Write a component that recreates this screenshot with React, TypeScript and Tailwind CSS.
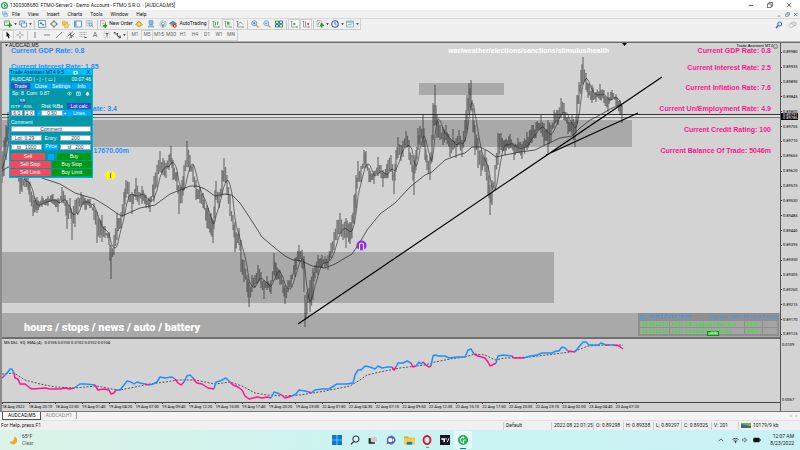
import type { ReactNode } from "react";

const ui = "font-['Roboto','Noto_Sans',sans-serif]";
const arial = "font-['Liberation_Sans',Arial,sans-serif]";

/* ---------- chart data: [x, high, low] ---------- */
const range: number[][] = [
  [2, 155, 183], [4, 140, 176], [6, 125, 160], [8, 112, 140], [14, 110, 150], [20, 170, 194], [22, 174, 192], [25, 172, 187], [28, 175, 190],
  [30, 182, 202], [33, 195, 216], [35, 198, 212], [37, 197, 213], [42, 196, 207], [48, 196, 206], [53, 194, 204], [58, 198, 212],
  [62, 187, 203], [65, 195, 206], [67, 200, 229], [70, 198, 213], [72, 212, 240], [75, 200, 227], [78, 197, 215], [81, 192, 207],
  [85, 198, 210], [90, 199, 208], [94, 203, 220], [97, 212, 243], [100, 220, 238], [102, 215, 242], [105, 226, 238], [109, 232, 245],
  [111, 245, 279], [114, 235, 255], [117, 213, 240], [121, 212, 228], [124, 192, 215], [126, 180, 198], [129, 182, 202],
  [132, 192, 214], [136, 178, 200], [139, 192, 205], [142, 186, 204], [146, 195, 208], [150, 197, 212], [154, 176, 202],
  [157, 165, 187], [160, 151, 172], [163, 158, 175], [166, 163, 178], [169, 155, 170], [171, 146, 165], [173, 160, 180],
  [177, 172, 190], [179, 185, 214], [182, 180, 203], [184, 165, 190], [187, 141, 167], [190, 155, 172], [193, 165, 182],
  [196, 180, 200], [200, 187, 203], [203, 193, 208], [207, 205, 228], [211, 213, 235], [213, 220, 243], [215, 190, 218],
  [216, 181, 200], [219, 192, 208], [222, 170, 195], [224, 158, 182], [227, 175, 195], [230, 195, 216], [233, 215, 230],
  [235, 222, 252], [239, 228, 245], [241, 240, 272], [244, 260, 282], [247, 275, 292], [249, 282, 307], [252, 275, 292],
  [255, 275, 288], [258, 265, 283], [261, 272, 288], [264, 280, 299], [267, 276, 290], [271, 280, 294], [274, 253, 275],
  [276, 263, 280], [280, 270, 285], [283, 280, 293], [285, 285, 304], [288, 280, 292], [291, 275, 287], [295, 258, 277],
  [299, 245, 262], [302, 250, 268], [304, 256, 292], [305, 295, 327], [307, 292, 314], [309, 288, 298], [310, 280, 312],
  [313, 268, 300], [315, 265, 278], [318, 255, 275], [322, 255, 268], [325, 256, 268], [328, 255, 270], [331, 243, 258],
  [334, 232, 250], [337, 220, 240], [340, 213, 234], [343, 224, 240], [346, 218, 248], [350, 222, 244], [352, 215, 238],
  [354, 195, 224], [356, 175, 208], [358, 161, 182], [361, 166, 182], [364, 150, 168], [366, 151, 168], [369, 168, 182],
  [374, 171, 184], [378, 157, 176], [381, 165, 178], [383, 170, 187], [388, 160, 178], [391, 155, 172], [394, 172, 194],
  [396, 150, 172], [398, 137, 158], [401, 145, 161], [403, 141, 157], [406, 131, 147], [409, 140, 160], [412, 155, 172],
  [414, 160, 195], [416, 150, 170], [418, 128, 150], [420, 126, 145], [423, 114, 147], [425, 140, 160], [427, 155, 170],
  [430, 157, 180], [432, 135, 162], [433, 103, 140], [435, 85, 125], [437, 115, 138], [440, 125, 140], [443, 127, 145],
  [446, 125, 140], [450, 138, 157], [453, 129, 150], [456, 138, 158], [459, 130, 145], [462, 140, 157], [465, 120, 142],
  [467, 95, 130], [469, 83, 115], [471, 80, 110], [473, 108, 132], [475, 125, 155], [478, 138, 168], [481, 150, 176],
  [485, 150, 172], [488, 165, 195], [490, 185, 215], [492, 180, 205], [495, 165, 190], [498, 133, 165], [501, 133, 150],
  [505, 140, 155], [510, 134, 148], [514, 145, 160], [518, 138, 152], [522, 144, 159], [527, 132, 150], [532, 125, 143],
  [536, 122, 138], [541, 115, 133], [544, 123, 145], [548, 120, 153], [551, 125, 142], [554, 110, 128], [558, 110, 125],
  [561, 98, 117], [564, 103, 120], [568, 117, 134], [572, 114, 135], [575, 122, 147], [577, 95, 124], [579, 82, 104],
  [581, 70, 94], [583, 57, 84], [586, 73, 90], [588, 83, 98], [592, 85, 103], [596, 92, 102], [600, 84, 100], [604, 90, 103],
  [608, 92, 112], [612, 90, 100], [616, 94, 106], [620, 100, 115], [622, 105, 123],
];

type Bar = { x: number; hi: number; lo: number };

function buildBars(): Bar[] {
  const bars: Bar[] = [];
  let seed = 7;
  const rnd = () => {
    seed = (seed * 16807) % 2147483647;
    return seed / 2147483647;
  };
  for (let i = 0; i < range.length - 1; i++) {
    const [x0, h0, l0] = range[i];
    const [x1, h1, l1] = range[i + 1];
    const n = Math.max(1, Math.round((x1 - x0) / 1.3));
    for (let k = 0; k < n; k++) {
      const f = k / n;
      const hi = h0 + (h1 - h0) * f;
      const lo = l0 + (l1 - l0) * f;
      const s = k === 0 ? 0 : (lo - hi) * 0.4;
      bars.push({ x: x0 + (x1 - x0) * f, hi: hi + s * rnd(), lo: lo - s * rnd() });
    }
  }
  bars.push({ x: 622, hi: 105, lo: 123 });
  return bars;
}

const bars = buildBars();
const wickPath = bars.map((b) => `M${b.x.toFixed(1)} ${b.hi.toFixed(1)}V${b.lo.toFixed(1)}`).join("");
const fastPath = bars
  .map((b, i) => {
    const win = bars.slice(Math.max(0, i - 5), i + 1);
    const y = win.reduce((a, c) => a + (c.hi + c.lo) / 2, 0) / win.length;
    return `${i ? "L" : "M"}${b.x.toFixed(1)} ${y.toFixed(1)}`;
  })
  .join("");

const slow =
  "2,171 8,167 24,170 42,178 60,184 75,193 95,199 108,207 118,214 122,216 140,208 155,205 170,194 180,190 190,186 197,186 205,189 215,196 225,194 232,195 240,203 250,218 262,237 275,248 285,256 293,260 302,261 312,266 325,268 335,264 345,258 352,254 360,242 367,230 380,214 395,203 410,187 425,175 432,172 445,160 458,155 465,153 472,147 480,147 488,151 496,157 505,155 520,152 535,150 545,145 560,138 572,136 580,128 590,120 600,115 610,109 622,104";

const BLUE = "#1e90ff";
const PINK = "#ff1493";
const volatility: [string, string][] = [
  [PINK, "2,378 5,375"],
  [BLUE, "5,375 8,372 10,369 12,369 14,373"],
  [PINK, "14,373 15,378 18,379 20,384 25,384 30,388 32,389 45,388 50,389 60,389 65,388 70,389 74,388"],
  [BLUE, "74,388 77,386 80,384 86,384 95,385"],
  [PINK, "95,385 98,390 104,389 109,390 111,394 114,393 116,390"],
  [BLUE, "116,390 120,390 124,385 127,381 131,382 134,384 137,382 140,383 145,384"],
  [PINK, "145,384 149,385"],
  [BLUE, "149,385 153,384 157,382 160,377 165,378 172,377 175,379"],
  [PINK, "175,379 178,383 181,385 184,382"],
  [BLUE, "184,382 187,376 190,375 193,378"],
  [PINK, "193,378 195,381 197,383 202,384 208,388 214,389"],
  [BLUE, "214,389 216,382 220,381 226,378 230,382"],
  [PINK, "230,382 233,385 238,387 242,390 245,396 249,399 257,397 262,398 267,397 271,398"],
  [BLUE, "271,398 274,392 280,394"],
  [PINK, "280,394 283,396 285,398 292,396"],
  [BLUE, "292,396 296,394 299,390 305,391 309,392"],
  [PINK, "309,392 311,393"],
  [BLUE, "311,393 315,390 322,389 329,389 337,384 347,384 353,383 355,375 358,370 361,370 365,366 370,367 375,369 378,366 382,368 388,367 392,367"],
  [PINK, "392,367 394,370 396,367"],
  [BLUE, "396,367 398,363 403,363 407,361 411,363"],
  [PINK, "411,363 413,367 416,366"],
  [BLUE, "416,366 419,362 421,364 423,362"],
  [PINK, "423,362 426,365 429,367 431,366"],
  [BLUE, "431,366 433,356 435,355 438,356 445,356 449,358 457,357 465,357 468,350 471,349 474,354"],
  [PINK, "474,354 478,356 485,358 488,362 490,366 496,363"],
  [BLUE, "496,363 498,356 503,355 512,356"],
  [PINK, "512,356 514,358 524,358"],
  [BLUE, "524,358 530,356 537,355 542,353 552,353 556,351 559,351 562,347 565,348 568,351"],
  [PINK, "568,351 575,352"],
  [BLUE, "575,352 578,348 583,342 586,342 589,345 598,345 601,343 606,345"],
  [PINK, "606,345 609,345"],
  [BLUE, "609,345 614,345"],
  [PINK, "614,345 619,346 623,349"],
];
const signal =
  "2,374 14,373 25,380 40,384 55,387 75,388 85,387 97,386 112,389 120,390 135,387 150,384 165,382 178,380 195,380 215,384 230,382 242,386 255,393 267,395 285,396 300,395 325,391 350,386 360,380 367,375 380,372 400,368 425,365 435,362 450,359 465,357 475,354 485,355 495,360 505,358 530,357 555,354 570,352 578,350 588,346 605,345 623,345";

const prices = Array.from({ length: 20 }, (_, i) => (0.8998 - i * 0.00045).toFixed(5));
const times = [
  "18 Aug 2022", "18 Aug 20:10", "18 Aug 22:50", "19 Aug 01:40", "19 Aug 04:20", "19 Aug 07:00", "19 Aug 09:40", "19 Aug 12:20",
  "19 Aug 15:00", "19 Aug 17:40", "19 Aug 20:20", "19 Aug 23:00", "22 Aug 01:50", "22 Aug 04:30", "22 Aug 07:10", "22 Aug 09:50",
  "22 Aug 12:30", "22 Aug 15:10", "22 Aug 17:50", "22 Aug 20:30", "22 Aug 23:10", "23 Aug 02:00", "23 Aug 04:40", "23 Aug 07:20",
];

/* ---------- small pieces ---------- */
function Ico({ children, className = "size-[8px]" }: { children: ReactNode; className?: string }) {
  return (
    <svg viewBox="0 0 16 16" className={`shrink-0 ${className}`} fill="none" aria-hidden="true">
      {children}
    </svg>
  );
}

function Tool({ label, children, w = "w-[12px]", on = false }: { label: string; children: ReactNode; w?: string; on?: boolean }) {
  return (
    <button
      aria-label={label}
      className={`flex h-[11px] shrink-0 items-center justify-center gap-[2px] ${w} ${on ? "border border-[#d0d0d0] bg-[#f8f8f8]" : ""}`}
    >
      {children}
    </button>
  );
}

const Caret = () => (
  <Ico className="h-[4px] w-[3px]">
    <path d="M1 4h14l-7 9z" fill="#222" />
  </Ico>
);
const Sep = () => <div className="mx-px h-[9px] w-px shrink-0 bg-[#c4c4c4]" />;

const Plus = () => <path d="M8 10h3V7h3v3h2v3h-2v3h-3v-3H8z" fill="#16a516" />;
const Axes = () => <path d="M3 2v12h12M1 4l2-2 2 2M13 12l2 2-2 2" stroke="#667" strokeWidth="1.2" />;

function Toolbar() {
  return (
    <div className="flex h-[12px] items-center border-t border-[#d9d9d9] bg-[#f0f0f0]">
      <div className={`flex h-[11px] items-center border-r border-b border-[#cfcfcf] pl-[3px] ${ui} text-[5px] text-[#111]`}>
        <Tool label="New chart" w="w-[15px]">
          <Ico><path d="M1 2h10v9H1z" fill="#fff" stroke="#3f8f3f" strokeWidth="1.6" /><path d="M3 5h6M3 8h6" stroke="#7ab" /><path d="M7 9h3V6h3v3h3v3h-3v3h-3v-3H7z" fill="#16a516" /></Ico>
          <Caret />
        </Tool>
        <Tool label="Profiles" w="w-[15px]">
          <Ico><path d="M1 2h10v8H1z" fill="#dbe9f7" stroke="#4b86c2" strokeWidth="1.5" /><path d="M5 6h10v8H5z" fill="#f4f8fc" stroke="#4b86c2" strokeWidth="1.5" /></Ico>
          <Caret />
        </Tool>
        <Sep />
        <Tool label="Market Watch"><Ico><path d="M1 1h14v14H1z" fill="#eaf4fc" stroke="#3c8fd0" strokeWidth="1.5" /><path d="M3 8l3-5 3 5z" fill="#2ca52c" /><path d="M7 8h6l-3 5z" fill="#e06a2a" /></Ico></Tool>
        <Tool label="Data Window"><Ico><circle cx="8" cy="8" r="5" stroke="#666" strokeWidth="1.4" /><path d="M8 0v5M8 11v5M0 8h5M11 8h5" stroke="#555" strokeWidth="1.4" /></Ico></Tool>
        <Tool label="Navigator"><Ico><path d="M1 2h5l1 2h4v6H1z" fill="#f5cf52" stroke="#c6982a" /><path d="M9 5l2 3.500 4 .5-3 3 .8 3.500L9 14l-4 2 .5-4-2.500-2.500L7 9z" fill="#f8dc6a" stroke="#c6982a" /></Ico></Tool>
        <Tool label="Terminal"><Ico><path d="M1 2h14v12H1z" fill="#fff" stroke="#2f7fd0" strokeWidth="1.6" /><path d="M2 3h3v10H2z" fill="#5aa2e0" /></Ico></Tool>
        <Tool label="Strategy Tester"><Ico><path d="M1 1h11v11H1z" fill="#e8f0f8" stroke="#7c9cc0" /><path d="M3 4h7M3 7h4" stroke="#6a8" /><circle cx="9" cy="9" r="3" fill="#cfe6fa" stroke="#4779b0" strokeWidth="1.300" /><path d="M11 11l4 4" stroke="#c99a2e" strokeWidth="2" /></Ico></Tool>
        <Sep />
        <Tool label="New Order" w="w-[34px]">
          <Ico><path d="M3 1h8l2 3v8H3z" fill="#fff" stroke="#777" /><path d="M5 4h5M5 7h5" stroke="#888" /><Plus /></Ico>
          <span className="whitespace-nowrap">New Order</span>
        </Tool>
        <Tool label="MetaEditor"><Ico><path d="M8 2l7 7-7 5-7-5z" fill="#f0b92e" stroke="#b37a14" /><path d="M8 5l3 4-3 2-3-2z" fill="#fbe28a" /></Ico></Tool>
        <Tool label="Cloud"><Ico><rect x="4" y="1" width="8" height="8" rx="1" fill="#7fbcf0" stroke="#3c82c4" /><path d="M2 14c0-4 12-4 12 0z" fill="#a9cdec" stroke="#4b86c2" /></Ico></Tool>
        <Tool label="Signals"><Ico><circle cx="8" cy="8" r="6.500" stroke="#8fb0c8" strokeWidth="1.500" /><circle cx="8" cy="8" r="3.500" stroke="#6a9" strokeWidth="1.500" /><path d="M8 8v7" stroke="#2a9d4a" strokeWidth="2" /></Ico></Tool>
        <Tool label="AutoTrading" w="w-[38px]">
          <Ico><path d="M1 7l7-5 7 5-7 3z" fill="#4f94d8" stroke="#2a62a0" /><path d="M3 9v3c3 3 7 3 10 0V9l-5 2z" fill="#e8b52e" /><circle cx="11.500" cy="11.500" r="4" fill="#d8341e" /><path d="M10 10h3v3h-3z" fill="#fff" /></Ico>
          <span className="whitespace-nowrap">AutoTrading</span>
        </Tool>
        <Sep />
        <Tool label="Bar chart"><Ico><Axes /><path d="M7 4v7M11 3v7M5.500 9H7M11 5h2" stroke="#2a9d2a" strokeWidth="1.400" /></Ico></Tool>
        <Tool label="Candlesticks" on><Ico><Axes /><path d="M8 2v10M12 3v8" stroke="#188a18" /><path d="M6.500 4h3v5h-3z" fill="#20a820" /></Ico></Tool>
        <Tool label="Line chart"><Ico><Axes /><path d="M4 11c2-8 5-8 10-2" stroke="#2a9d2a" strokeWidth="1.300" /></Ico></Tool>
        <Sep />
        <Tool label="Zoom in"><Ico><circle cx="6.500" cy="6.500" r="5" fill="#d6eafc" stroke="#3f80c8" strokeWidth="1.500" /><path d="M4 6.500h5M6.500 4v5" stroke="#2b66a8" strokeWidth="1.300" /><path d="M10 10l5 5" stroke="#d0a02e" strokeWidth="2.400" /></Ico></Tool>
        <Tool label="Zoom out"><Ico><circle cx="6.500" cy="6.500" r="5" fill="#d6eafc" stroke="#5b93cc" strokeWidth="1.500" /><path d="M4 6.500h5" stroke="#2b66a8" strokeWidth="1.300" /><path d="M10 10l5 5" stroke="#d0a02e" strokeWidth="2.400" /></Ico></Tool>
        <Tool label="Tile windows"><Ico><path d="M1 2h6v5H1zM9 9h6v5H9z" fill="#dff0d8" stroke="#2f9a2f" strokeWidth="1.800" /><path d="M9 2h6v5H9zM1 9h6v5H1z" fill="#dbe9f7" stroke="#2f66b8" strokeWidth="1.800" /></Ico></Tool>
        <Sep />
        <Tool label="Auto scroll" on><Ico><Axes /><path d="M7 5l5 3-5 3z" fill="#20a820" /></Ico></Tool>
        <Tool label="Chart shift" on><Ico><Axes /><path d="M7 3v9" stroke="#357" strokeWidth="1.300" /><path d="M14 5L9 8l5 3z" fill="#d0402a" /></Ico></Tool>
        <Sep />
        <Tool label="Indicators" w="w-[15px]"><Ico><path d="M2 1h8l2 3v9H2z" fill="#eee" stroke="#888" /><path d="M4 10c2-6 3-6 5-3" stroke="#555" /><path d="M8 9h2V6h3v3h3v3h-3v3h-3v-3H8z" fill="#16a516" /></Ico><Caret /></Tool>
        <Tool label="Periods" w="w-[15px]"><Ico><circle cx="8" cy="8" r="6.500" fill="#e8f2fc" stroke="#1f62b8" strokeWidth="2.200" /><path d="M8 4v4l3 2" stroke="#333" strokeWidth="1.300" /></Ico><Caret /></Tool>
        <Tool label="Templates" w="w-[15px]"><Ico><path d="M1 2h14v12H1z" fill="#eef4fa" stroke="#6f9cc8" strokeWidth="1.400" /><path d="M1 4h14" stroke="#6f9cc8" strokeWidth="2" /><path d="M3 11l3-3 3 2 4-4" stroke="#3a9a5a" strokeWidth="1.300" /></Ico><Caret /></Tool>
      </div>
      <div className="ml-auto flex items-center gap-[5px] pr-[3px]">
        <button aria-label="Search"><Ico><circle cx="9.500" cy="6" r="4" stroke="#2a62c0" strokeWidth="2" /><path d="M6.500 9L2 14" stroke="#2a62c0" strokeWidth="2.400" /></Ico></button>
        <button aria-label="Chat"><Ico className="h-[8px] w-[9px]"><ellipse cx="10" cy="6" rx="5.500" ry="4" fill="#ddd" stroke="#999" /><ellipse cx="5.500" cy="9" rx="5" ry="3.500" fill="#f4f4f4" stroke="#999" /></Ico></button>
      </div>
    </div>
  );
}

function DrawBar() {
  const frames = ["M1", "M5", "M15", "M30", "H1", "H4", "D1", "W1", "MN"];
  const g = "#666";
  return (
    <div className="flex h-[11px] items-center bg-[#f0f0f0]">
      <div className={`flex h-[11px] items-center border-r border-b border-[#cfcfcf] pl-[2px] ${ui} text-[5px] text-[#666]`}>
        <Tool label="Cursor" on><Ico><path d="M5 1l7 8H9l2 5-2 1-2-5-2 2z" fill="#111" /></Ico></Tool>
        <Tool label="Crosshair"><Ico><path d="M8 1v5M8 10v5M1 8h5M10 8h5" stroke={g} strokeWidth="1.400" /></Ico></Tool>
        <Sep />
        <Tool label="Vertical line"><Ico><path d="M8 2v12" stroke={g} strokeWidth="1.600" /></Ico></Tool>
        <Tool label="Horizontal line"><Ico><path d="M2 8h12" stroke={g} strokeWidth="1.600" /></Ico></Tool>
        <Tool label="Trendline"><Ico><path d="M2 14L14 2" stroke={g} strokeWidth="1.600" /></Ico></Tool>
        <Tool label="Channel"><Ico><path d="M1 11L12 1M4 15L15 5M3 6l10 5M6 3l3 11" stroke="#555" strokeWidth="1.500" /></Ico></Tool>
        <Tool label="Fibonacci"><Ico><path d="M1 3h14M1 7h14M1 11h11" stroke="#888" strokeWidth="1.400" strokeDasharray="2 1" /><path d="M11 13h4" stroke="#444" strokeWidth="2" /></Ico></Tool>
        <Tool label="Text"><span className="text-[7px] leading-none">A</span></Tool>
        <Tool label="Text label"><Ico><path d="M2 2h12v12H2z" stroke="#999" strokeDasharray="2 2" /><path d="M5 5h6M8 5v7" stroke="#444" strokeWidth="1.600" /></Ico></Tool>
        <Tool label="Arrows" w="w-[13px]"><Ico><path d="M2 3l4 4 3-3v6l6 3M2 3h3M11 14l4-1-1-4" stroke="#333" strokeWidth="1.800" /></Ico><Caret /></Tool>
        <Sep />
        {frames.map((f) => (
          <Tool key={f} label={f} on={f === "M5"}>{f}</Tool>
        ))}
      </div>
    </div>
  );
}

/* ---------- trade panel ---------- */
const field = "h-[6px] min-w-0 border border-[#8ad] bg-white text-center text-[5px] leading-none text-[#333] outline-none";
const azure = "bg-[#00a8ff] text-white";
const navy = "bg-[#2f4fd0] text-white";

function TradePanel() {
  const tabs = ["Trade", "Close", "Settings", "Info"];
  return (
    <section className={`absolute top-[25px] left-[7px] flex h-[110px] w-[84px] flex-col border border-[#00b4e6] bg-[#0097a7] ${arial} text-[5px] leading-none text-white`}>
      <header className="flex h-[6px] items-center justify-between bg-[#00bfff] pr-[2px] text-[#124]">
        <h2 className="whitespace-nowrap">Trade Assistant MT4 9.5</h2>
        <Ico className="size-[5px]"><path d="M1 4h4l1-2h4l1 2h4v10H1z" fill="#e8f4fa" /><circle cx="8" cy="9" r="3" fill="#28a" /></Ico>
        <button aria-label="Close panel">X</button>
      </header>
      <div className="flex h-[8px] items-center justify-between px-px">
        <span>AUDCAD | - | - | ▭ |</span>
        <span>00:07:46</span>
      </div>
      <div className="grid h-[6px] grid-cols-4 gap-px px-px">
        {tabs.map((t, i) => (
          <button key={t} className={i === 0 ? navy : azure}>{t}</button>
        ))}
      </div>
      <div className="flex h-[9px] items-center pl-[2px]">
        <span className="mr-auto">Sp: 8&nbsp; Com: 0.87</span>
        <div className="flex gap-[4px] pr-[2px]">
          <Ico className="size-[5px]"><path d="M1 8c3-6 11-6 14 0-3 6-11 6-14 0z" stroke="#fff" strokeWidth="2" /><circle cx="8" cy="8" r="2.500" fill="#fff" /></Ico>
          <Ico className="size-[5px]"><path d="M2 4h12v10H2zM4 1v3M12 1v3M8 6v4h3" stroke="#fff" strokeWidth="2" /></Ico>
          <Ico className="size-[5px]"><path d="M3 12c2-2 1-9 5-9s3 7 5 9zM6 14h4" fill="#fff" stroke="#fff" strokeWidth="2" /></Ico>
        </div>
      </div>
      <div className="flex h-[18px] px-px pt-[2px]">
        <div className="relative grid w-[24px] grid-cols-2 content-end gap-x-px gap-y-px">
          <span className="absolute top-0 left-[8px] bg-[#2f4fd0] px-px text-[3px]">R/R</span>
          <label htmlFor="rtp" className="text-[4px]">R/TP</label>
          <label htmlFor="rsl" className="text-[4px]">R/SL</label>
          <input id="rtp" defaultValue="6.0" className={field} />
          <input id="rsl" defaultValue="1.0" className={field} />
        </div>
        <div className="ml-[2px] flex w-[30px] flex-col items-center justify-end gap-px">
          <label htmlFor="risk" className="whitespace-nowrap">Risk %Ba</label>
          <div className="flex w-full">
            <button aria-label="Decrease risk" className={`w-[4px] ${azure}`}>-</button>
            <input id="risk" defaultValue="0.50" className={`flex-1 ${field}`} />
            <button aria-label="Increase risk" className={`w-[4px] ${azure}`}>+</button>
          </div>
        </div>
        <div className="ml-auto flex w-[24px] flex-col justify-end gap-px">
          <button className={`h-[6px] whitespace-nowrap ${navy}`}>Lot calc</button>
          <button className={`h-[6px] ${azure}`}>Lines</button>
        </div>
      </div>
      <div className="flex h-[18px] flex-col justify-end gap-px px-px pb-[2px]">
        <label htmlFor="comment">Comment</label>
        <input id="comment" defaultValue="Comment" className={field} />
      </div>
      <div className="grid h-[17px] grid-cols-[31px_1fr_31px] items-center gap-x-[2px] px-px text-center">
        <input aria-label="Lot" defaultValue="Lot: 0.29" className={`${field} bg-[#d3d3d3] pr-[4px]`} />
        <label htmlFor="entry">Entry:</label>
        <input id="entry" defaultValue="200" className={field} />
        <input aria-label="Take profit" defaultValue="tp   1000" className={field} />
        <button className={`h-[6px] ${azure}`}>Price</button>
        <input aria-label="Stop loss" defaultValue="sl   200" className={field} />
      </div>
      <div className="mt-auto flex flex-col gap-px pb-px">
        <div className="flex h-[7px] items-center gap-[3px] px-px">
          <button className="h-full flex-1 bg-[#f04a5c]">Sell</button>
          <input type="checkbox" aria-label="Confirm" className="size-[6px] appearance-none bg-[#00a8ff]" />
          <button className="h-full flex-1 bg-[#009a10]">Buy</button>
        </div>
        <div className="grid grid-cols-2 gap-px">
          <button className="h-[7px] bg-[#f04a5c]">Sell Stop</button>
          <button className="h-[7px] bg-[#009a10]">Buy Stop</button>
          <button className="h-[7px] bg-[#f04a5c]">Sell Limit</button>
          <button className="h-[7px] bg-[#009a10]">Buy Limit</button>
        </div>
      </div>
    </section>
  );
}

function NewsPanel() {
  return (
    <div className={`absolute right-px bottom-px w-[141px] bg-[#8f8f8f] px-px pb-px ${arial} text-[5px] leading-none`}>
      <div className="flex h-[7px] items-center text-[#1e9fff]">
        <Ico className="mr-[3px] size-[6px]"><path d="M1 3l6 1 2-3v5l5 3-6 1-1 5-3-5H1l2-3z" fill="#1eb0ff" /></Ico>
        <span className="mr-auto">Next 2 Forex News</span>
        <span className="text-[4px]">Copyrights DaVinci FX Group</span>
        <span className="ml-[2px] text-[4px]">Forecast</span>
      </div>
      <table className="w-full table-fixed border-separate border-spacing-px text-[#10f010]">
        <colgroup>
          <col className="w-[29px]" /><col className="w-[74px]" /><col className="w-[17px]" /><col />
        </colgroup>
        <tbody>
          <tr className="h-[6px] [&>td]:bg-[#a4a4a4] [&>td]:p-0 [&>td]:pl-px [&>td]:whitespace-nowrap"><td>0d 08:22:14</td><td>AUD: CB Leading Index m/m</td><td>0.0%</td><td /></tr>
          <tr className="h-[6px] [&>td]:bg-[#a4a4a4] [&>td]:p-0 [&>td]:pl-px [&>td]:whitespace-nowrap"><td>1d 08:22:14</td><td>CAD: Corporate Profits q/q</td><td>1.9%</td><td /></tr>
        </tbody>
      </table>
      <span className="absolute right-[60px] bottom-0 border border-[#178a17] bg-[#5ad05a] px-px text-[3px] text-[#e8ffe8]">+8:00</span>
    </div>
  );
}

function MainChart() {
  const note = "absolute whitespace-nowrap text-[7px] leading-[8px] font-bold";
  return (
    <div className={`relative min-h-0 flex-1 overflow-hidden bg-[#d3d3d3] ${arial}`}>
      <svg viewBox="2 43 778 294" preserveAspectRatio="none" className="absolute inset-0 h-full w-full" fill="none" aria-label="AUDCAD price chart">
        <g fill="#a9a9a9">
          <path d="M2 120h630v27H2zM419 83h85v12h-85zM2 252h552v51H2zM2 313h778v24H2z" />
        </g>
        <path d="M2 116h778" stroke="#eee" />
        <path d="M2 114.500h778" stroke="#333" />
        <path d="M2 117.500h778" stroke="#777" />
        <path d={wickPath} stroke="#222" strokeOpacity="0.520" strokeWidth="1.300" />
        <path d={fastPath} stroke="#222" strokeWidth="0.600" />
        <polyline points={slow} stroke="#333" strokeWidth="0.800" />
        <path d="M298 324L662 77M546 155L638 113" stroke="#000" strokeWidth="1.200" />
        <path d="M622 43h5l-2.500 3z" fill="#000" />
        <path d="M5 44.500h3l-1.500 2z" fill="#000" />
        <circle cx="110.500" cy="175.500" r="5" fill="#ff0" />
        <path d="M110.500 170v3M110.500 178v3" stroke="#d3d3d3" strokeWidth="3" />
        <path d="M110.500 173v5" stroke="#770" strokeWidth="1.200" />
        <circle cx="361.500" cy="245.500" r="5" fill="#8a2be2" />
        <path d="M359.500 250v-5a2 2 0 0 1 4 0v5" stroke="#f4ecff" strokeWidth="1.200" />
      </svg>
      <span className="absolute top-0 left-[7px] text-[5px] leading-[5px] text-black">AUDCAD,M5</span>
      <span className="absolute top-0 right-[2px] flex items-center text-[4px] leading-[6px] text-black">
        Trade Assistant MT4
        <Ico className="size-[5px]"><circle cx="8" cy="8" r="7" stroke="#333" strokeWidth="1.500" /><path d="M5 6h1M10 6h1M5 10c2 2 4 2 6 0" stroke="#333" strokeWidth="1.500" /></Ico>
      </span>
      <div className="text-[#1e90ff]">
        <p className={`${note} top-[4px] left-[9px]`}>Current GDP Rate: 0.8</p>
        <p className={`${note} top-[20px] left-[9px]`}>Current Interest Rate: 1.85</p>
        <p className={`${note} top-[62px] left-[9px] flex w-[106px] justify-end overflow-hidden`}>Current Un/Employment Rate: 3.4</p>
        <p className={`${note} top-[104px] left-[9px] flex w-[118px] justify-end overflow-hidden`}>Current Balance Of Trade: 17670.00m</p>
      </div>
      <div className="text-[#ff1493]">
        <p className={`${note} top-[4px] right-[9px]`}>Current GDP Rate: 0.8</p>
        <p className={`${note} top-[21px] right-[9px]`}>Current Interest Rate: 2.5</p>
        <p className={`${note} top-[41px] right-[9px]`}>Current Inflation Rate: 7.6</p>
        <p className={`${note} top-[62px] right-[9px]`}>Current Un/Employment Rate: 4.9</p>
        <p className={`${note} top-[83px] right-[9px]`}>Current Credit Rating: 100</p>
        <p className={`${note} top-[104px] right-[9px]`}>Current Balance Of Trade: 5046m</p>
      </div>
      <p className={`${note} top-[4px] right-[171px] text-white`}>war/weather/elections/sanctions/stimulus/health</p>
      <p className="absolute bottom-[2px] left-[22px] font-['Roboto',sans-serif] text-[11px] leading-[14px] font-black whitespace-nowrap text-white">
        hours / stops / news / auto / battery
      </p>
      <NewsPanel />
      <TradePanel />
    </div>
  );
}

function ChartArea() {
  return (
    <main className="flex min-h-0 flex-1 border-t border-l-2 border-t-[#696969] border-l-[#8a8a8a] bg-[#d3d3d3]">
      <div className="flex min-w-0 flex-1 flex-col">
        <MainChart />
        <div className="h-[2px] bg-[#6e6e6e]" />
        <div className="relative h-[63px]">
          <svg viewBox="2 339 778 63" preserveAspectRatio="none" className="absolute inset-0 h-full w-full" fill="none" aria-label="Volatility indicator">
            <polyline points={signal} stroke="#333" strokeWidth="0.800" strokeDasharray="2 1.500" />
            {volatility.map(([c, p], i) => (
              <polyline key={i} points={p} stroke={c} strokeWidth="1.500" strokeLinejoin="round" />
            ))}
          </svg>
          <p className={`absolute top-px left-[2px] ${ui} text-[4px] leading-[5px] whitespace-pre text-black`}>M5 DSL  VQ  EMA (4)   0.0105 0.0103 0.0102 0.0102 0.0104</p>
        </div>
        <div className="h-[9px] border-t border-[#444]">
          <ol className={`grid w-[82.3%] grid-cols-24 ${ui} text-[4px] leading-[8px] text-black`}>
            {times.map((t) => (
              <li key={t} className="whitespace-nowrap"><span className="block h-px w-px bg-[#444]" /><span className="block leading-[6px]">{t}</span></li>
            ))}
          </ol>
        </div>
      </div>
      <div className={`relative flex w-[20px] flex-col border-l border-[#555] ${ui} text-[4px] leading-none text-black`}>
        <ol className="flex flex-1 flex-col pt-[2px]">
          {prices.map((p) => (
            <li key={p} className="flex flex-1 items-center gap-px"><span className="h-px w-px bg-[#333]" />{p}</li>
          ))}
        </ol>
        <div className="flex h-[69px] flex-col justify-between pt-px pb-[9px] pl-px">
          <span>0.0109</span>
          <span>0.0067</span>
        </div>
        <div className="absolute top-[70px] right-[2px] left-0 bg-black pl-[2px] text-white">
          <div className="leading-[3px]">0.89791</div>
          <div className="leading-[4px]">0.89786</div>
        </div>
      </div>
    </main>
  );
}

function StatusBar() {
  const cell = "flex h-[8px] items-center border-l border-[#cfcfcf] pl-[2px] whitespace-nowrap";
  return (
    <footer className={`flex h-[10px] items-center border-t border-[#e2e2e2] bg-[#f0f0f0] pl-px ${ui} text-[5px] text-[#222]`}>
      <span className="mr-auto">For Help, press F1</span>
      <span className={`${cell} w-[48px]`}>Default</span>
      <span className={`${cell} w-[42px]`}>2022.08.22 01:25</span>
      <span className={`${cell} w-[30px]`}>O: 0.89298</span>
      <span className={`${cell} w-[30px]`}>H: 0.89338</span>
      <span className={`${cell} w-[28px]`}>L: 0.89297</span>
      <span className={`${cell} w-[30px]`}>C: 0.89325</span>
      <span className={`${cell} w-[27px]`}>V: 201</span>
      <span className={`${cell} w-[62px] gap-[2px]`}>
        <svg viewBox="0 0 20 10" className="h-[5px] w-[10px]" aria-hidden="true"><path d="M0 0h20v10H0z" fill="#8aa84a" /><path d="M0 2l20 5v3H0z" fill="#3a6a8a" /></svg>
        10179/9 kb
      </span>
    </footer>
  );
}

function Taskbar() {
  const cell = "relative flex h-[18px] w-[18px] items-center justify-center";
  const dot = <span className="absolute bottom-px h-px w-[3px] rounded-full bg-[#7a8a8a]" />;
  return (
    <nav className={`grid h-[20px] grid-cols-[1fr_auto_1fr] items-center bg-linear-to-r from-[#dcf3e8] via-[#c9f3f1] to-[#cbf2f6] ${ui} text-[5px] leading-[7px] text-[#222]`}>
      <div className="flex items-center gap-[4px] pl-[9px]">
        <Ico className="size-[9px]"><path d="M10 1a7 7 0 1 1-9 9c6 1 9-3 9-9z" fill="#f5a623" /></Ico>
        <div className="text-[#333]"><div>65°F</div><div className="text-[#666]">Clear</div></div>
      </div>
      <div className="flex">
        <button aria-label="Start" className={cell}><Ico className="size-[10px]"><path d="M0 0h7.500v7.500H0zM8.500 0H16v7.500H8.500zM0 8.500h7.500V16H0zM8.500 8.500H16V16H8.500z" fill="#0a78d4" /></Ico></button>
        <button aria-label="Search" className={cell}><Ico className="size-[10px]"><circle cx="9.500" cy="6.500" r="5" stroke="#222" strokeWidth="1.600" /><path d="M6 10.500L1.500 15" stroke="#222" strokeWidth="1.800" /></Ico></button>
        <button aria-label="Task view" className={cell}><Ico className="size-[10px]"><path d="M1 5h10v9H1z" fill="#222" /><path d="M5 2h10v9H5z" fill="#c8cccc" stroke="#f6f6f6" /></Ico></button>
        <button aria-label="Chat" className={cell}><Ico className="size-[10px]"><path d="M8 1a7 7 0 1 1-4 12.700L1 15l1-4A7 7 0 0 1 8 1z" fill="#5b5fc7" /><rect x="4" y="5" width="5.500" height="6" rx="1" fill="#fff" /><path d="M10 7l2.500-1.500v5L10 9z" fill="#fff" /></Ico></button>
        <button aria-label="File Explorer" className={cell}><Ico className="size-[11px]"><path d="M0 2h6l1.500 2H16v4H0z" fill="#e8a818" /><path d="M0 5h16v9H0z" fill="#fbce4a" /><path d="M4 10h8v4H4z" fill="#1877c8" /></Ico></button>
        <button aria-label="Opera" className={cell}><Ico className="size-[10px]"><ellipse cx="8" cy="8" rx="5.500" ry="6.500" stroke="#e0142a" strokeWidth="3" /></Ico>{dot}</button>
        <button aria-label="TradingView" className={cell}><Ico className="size-[10px]"><path d="M0 0h16v16H0z" fill="#131722" /><path d="M2 5h6v6H5.500V7.500H2zM11 11l2.500-6H15l-2.500 6zM9 5h2v2H9z" fill="#fff" /></Ico></button>
        <button aria-label="MetaTrader" className={`${cell} rounded-[2px] bg-[#e6faf8]`}><Ico className="size-[10px]"><circle cx="8" cy="8" r="8" fill="#1fae5a" /><path d="M9 3a5 5 0 1 0 0 10V8h3M9 3v3" stroke="#fff" strokeWidth="1.600" /></Ico><span className="absolute bottom-0 h-px w-[6px] rounded-full bg-[#0b7a94]" /></button>
      </div>
      <div className="flex items-center justify-end gap-[3px] pr-[6px]">
        <Ico className="mr-[5px] size-[6px]"><path d="M2 11l6-6 6 6" stroke="#222" strokeWidth="1.800" /></Ico>
        <Ico className="size-[7px]"><path d="M1 6c4-4 10-4 14 0M3.500 9c3-3 6-3 9 0" stroke="#333" strokeWidth="1.800" /><path d="M5.500 10.500c2-1.500 3-1.500 5 0L8 14z" fill="#333" /></Ico>
        <Ico className="size-[6px]"><path d="M1 6h3l4-4v12l-4-4H1z" stroke="#333" strokeWidth="1.400" /><path d="M11 5c2 2 2 4 0 6" stroke="#333" strokeWidth="1.400" /></Ico>
        <Ico className="ml-[2px] size-[8px]"><rect x="1" y="4" width="12" height="8" rx="1.500" fill="#111" stroke="#111" /><path d="M14 6.500h1.500v3H14z" fill="#111" /></Ico>
        <div className="ml-[6px] text-right"><div>12:07 AM</div><div>8/23/2022</div></div>
      </div>
    </nav>
  );
}

export default function App() {
  return (
    <div className="flex h-screen w-full flex-col overflow-hidden bg-[#f0f0f0]">
      <header className={`flex h-[10px] items-center bg-white pl-px ${ui} text-[5px] leading-none text-[#222]`}>
        <Ico className="mr-[2px] size-[7px]"><circle cx="8" cy="8" r="6.500" fill="#fff" stroke="#1fa858" strokeWidth="3" /><path d="M8 4v8M8 8h4" stroke="#1fa858" strokeWidth="2" /></Ico>
        <h1 className="mr-auto whitespace-nowrap">1300308680: FTMO-Server2 - Demo Account - FTMO S.R.O. - [AUDCAD,M5]</h1>
        <div className="flex gap-[13px] pr-[8px]">
          <button aria-label="Minimize"><Ico className="size-[6px]"><path d="M2 9h12" stroke="#222" strokeWidth="2" /></Ico></button>
          <button aria-label="Restore"><Ico className="size-[6px]"><path d="M1 5h10v10H1zM5 4V1h10v10h-3" stroke="#222" strokeWidth="1.800" /></Ico></button>
          <button aria-label="Close"><Ico className="size-[6px]"><path d="M2 2l12 12M14 2L2 14" stroke="#222" strokeWidth="1.800" /></Ico></button>
        </div>
      </header>
      <div className={`flex h-[8px] items-center pl-[2px] ${ui} text-[5px] leading-none text-[#111]`}>
        <Ico className="mr-[4px] size-[6px]"><path d="M1 2h10v7H1zM5 7h10v7H5z" fill="#e2effb" stroke="#4f9ad8" strokeWidth="1.600" /></Ico>
        <div className="mr-auto flex gap-[8px]">
          {["File", "View", "Insert", "Charts", "Tools", "Window", "Help"].map((m) => (
            <button key={m}>{m}</button>
          ))}
        </div>
        <div className="flex gap-[3px] pr-[2px]">
          <button aria-label="Minimize chart"><Ico className="size-[5px]"><path d="M3 13h8" stroke="#556b8a" strokeWidth="2.500" /></Ico></button>
          <button aria-label="Restore chart"><Ico className="size-[5px]"><path d="M2 6h8v8H2zM6 5V2h8v8h-3" stroke="#556b8a" strokeWidth="2" /></Ico></button>
          <button aria-label="Close chart"><Ico className="size-[5px]"><path d="M3 3l10 10M13 3L3 13" stroke="#556b8a" strokeWidth="2.500" /></Ico></button>
        </div>
      </div>
      <Toolbar />
      <DrawBar />
      <div className="h-px bg-[#b4b4b4]" />
      <ChartArea />
      <div className={`flex h-[9px] items-start border-t border-[#777] bg-[#f4f4f4] pl-[2px] ${ui} text-[5px] leading-[7px]`}>
        <button className="h-[8px] border-x border-b border-[#555] bg-white px-[5px] text-black">AUDCAD,M5</button>
        <button className="border-r border-[#999] px-[4px] text-[#888]">AUDCAD,H1</button>
        <div className="ml-auto flex gap-[4px] pr-[3px] text-[#555]"><button aria-label="Previous tab">‹</button><button aria-label="Next tab">›</button></div>
      </div>
      <StatusBar />
      <Taskbar />
    </div>
  );
}
